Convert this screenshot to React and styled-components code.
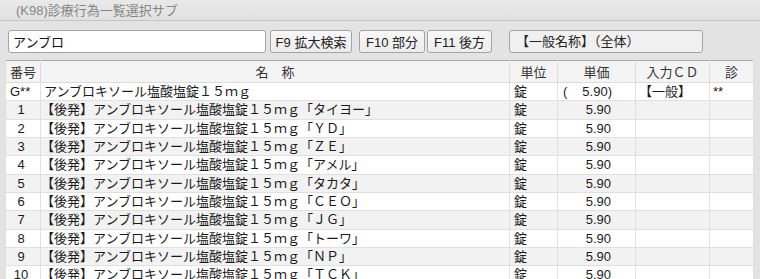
import React from 'react';
import styled, {createGlobalStyle} from 'styled-components';

const Global = createGlobalStyle`
  html, body {
    margin: 0;
    padding: 0;
    overflow: hidden;
    background: #e3e3e3;
  }
  body {
    font-family: "Liberation Sans", "Noto Sans CJK JP", sans-serif;
    font-size: 13px;
    color: #222;
  }
`;

const Window = styled.div`
  width: 760px;
  height: 279px;
  overflow: hidden;
  background: #e3e3e3;
`;

const TitleBar = styled.div`
  height: 21px;
  line-height: 21px;
  padding-left: 16px;
  color: #858585;
  background: linear-gradient(#e9e9e9, #e1e1e1);
  border-bottom: 1px solid #c4c4c4;
  box-sizing: border-box;
`;

const Toolbar = styled.div`
  display: flex;
  align-items: center;
  padding: 9px 0 0 8px;
  height: 23px;
`;

const SearchInput = styled.input`
  box-sizing: border-box;
  width: 258px;
  height: 23px;
  margin: 0 4px 0 0;
  padding: 0 4px;
  border: 1px solid #a4a4a4;
  border-radius: 3px;
  background: #fff;
  font: inherit;
  color: #111;
  outline: none;
`;

const FnButton = styled.button`
  box-sizing: border-box;
  width: ${p => p.$w}px;
  height: 23px;
  margin: 0 ${p => p.$gap || 0}px 0 0;
  padding: 0;
  border: 1px solid #a4a4a4;
  border-radius: 3px;
  background: linear-gradient(#f8f8f8, #ececec);
  font: inherit;
  color: #222;
  white-space: nowrap;
`;

const Label = styled.div`
  box-sizing: border-box;
  width: 194px;
  height: 23px;
  line-height: 21px;
  margin-left: 17px;
  padding-left: 6px;
  border: 1px solid #a4a4a4;
  border-radius: 3px;
  background: #f0f0f0;
  color: #222;
`;

const TableWrap = styled.div`
  margin: 7px 0 0 5px;
  width: 748px;
  background: #fff;
`;

const Grid = styled.table`
  width: 748px;
  table-layout: fixed;
  border-collapse: collapse;
  border: 1px solid #a9a9a9;
  background: #fff;
`;

const HeadCell = styled.th`
  height: 21px;
  padding: 0;
  font-weight: normal;
  color: #333;
  text-align: center;
  background: #f4f4f4;
  border: 1px solid #dcdcdc;
  border-top: none;
  white-space: nowrap;
`;

const Row = styled.tr`
  height: 18.33px;
  background: ${p => (p.$alt ? '#f2f2f2' : '#fff')};
`;

const Cell = styled.td`
  padding: 0 ${p => p.$pr ?? 3}px 0 ${p => p.$pl ?? 3}px;
  text-align: ${p => p.$align || 'left'};
  border: 1px solid #e0e0e0;
  white-space: nowrap;
  overflow: hidden;
  color: #1a1a1a;
  line-height: 17px;
`;

const Paren = styled.span`
  display: flex;
  justify-content: space-between;
`;

const names = ['タイヨー', 'ＹＤ', 'ＺＥ', 'アメル', 'タカタ', 'ＣＥＯ', 'ＪＧ', 'トーワ', 'ＮＰ', 'ＴＣＫ', 'サワイ', 'ツルハラ'];

const App = () => {
  return <Window>
    <Global/>
    <TitleBar>(K98)診療行為一覧選択サブ</TitleBar>
    <Toolbar>
      <SearchInput defaultValue="アンブロ"/>
      <FnButton $w={82} $gap={7}>F9 拡大検索</FnButton>
      <FnButton $w={66} $gap={2}>F10 部分</FnButton>
      <FnButton $w={65}>F11 後方</FnButton>
      <Label>【一般名称】（全体）</Label>
    </Toolbar>
    <TableWrap>
      <Grid>
        <colgroup>
          <col style={{width: 35}}/>
          <col style={{width: 469}}/>
          <col style={{width: 48}}/>
          <col style={{width: 78}}/>
          <col style={{width: 74}}/>
          <col style={{width: 44}}/>
        </colgroup>
        <thead>
          <tr>
            <HeadCell>番号</HeadCell>
            <HeadCell>名　称</HeadCell>
            <HeadCell>単位</HeadCell>
            <HeadCell>単価</HeadCell>
            <HeadCell>入力ＣＤ</HeadCell>
            <HeadCell>診</HeadCell>
          </tr>
        </thead>
        <tbody>
          <Row>
            <Cell $pl={4} $pr={0}>G**</Cell>
            <Cell>アンブロキソール塩酸塩錠１５ｍｇ</Cell>
            <Cell $pl={4}>錠</Cell>
            <Cell $pl={5} $pr={23}><Paren><span>(</span><span>5.90)</span></Paren></Cell>
            <Cell $pl={3}>【一般】</Cell>
            <Cell>**</Cell>
          </Row>
          {names.map((n, i) => (
            <Row key={n} $alt={i % 2 === 0}>
              <Cell $align="center" $pr={4} $pl={0}>{i + 1}</Cell>
              <Cell $pl={0}>【後発】アンブロキソール塩酸塩錠１５ｍｇ「{n}」</Cell>
              <Cell $pl={4}>錠</Cell>
              <Cell $align="right" $pr={24}>5.90</Cell>
              <Cell/>
              <Cell/>
            </Row>
          ))}
        </tbody>
      </Grid>
    </TableWrap>
  </Window>;
};

export default App;
